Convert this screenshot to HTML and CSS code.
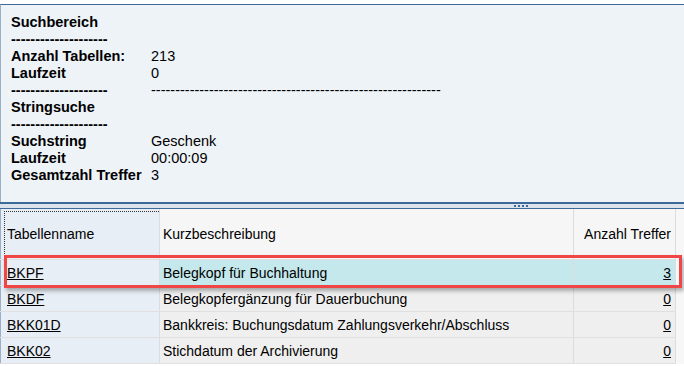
FILE: index.html
```html
<!DOCTYPE html>
<html lang="de">
  <head>
    <meta charset="UTF-8" />
    <meta name="viewport" content="width=device-width, initial-scale=1.0" />
    <title>Stringsuche</title>
    <link rel="stylesheet" href="styles.css">
  </head>
  <body>
    <div class="info">
      <div class="info-grid">
        <div class="b">Suchbereich</div><div></div>
        <div class="b">--------------------</div><div></div>
        <div class="b">Anzahl Tabellen:</div><div>213</div>
        <div class="b">Laufzeit</div><div>0</div>
        <div class="b">--------------------</div><div>------------------------------------------------------------</div>
        <div class="b">Stringsuche</div><div></div>
        <div class="b">--------------------</div><div></div>
        <div class="b">Suchstring</div><div>Geschenk</div>
        <div class="b">Laufzeit</div><div>00:00:09</div>
        <div class="b">Gesamtzahl Treffer</div><div>3</div>
      </div>
    </div>

    <div class="splitter"><span></span><span></span><span></span><span></span></div>

    <div class="result">
      <table class="grid">
        <thead>
          <tr>
            <th class="key focus"><span>Tabellenname</span></th>
            <th>Kurzbeschreibung</th>
            <th class="num">Anzahl Treffer</th>
            <th class="fill"></th>
          </tr>
        </thead>
        <tbody>
          <tr class="sel">
            <td class="key"><a href="#">BKPF</a></td>
            <td>Belegkopf für Buchhaltung</td>
            <td class="num"><a href="#">3</a></td>
            <td class="fill"></td>
          </tr>
          <tr>
            <td class="key"><a href="#">BKDF</a></td>
            <td>Belegkopfergänzung für Dauerbuchung</td>
            <td class="num"><a href="#">0</a></td>
            <td class="fill"></td>
          </tr>
          <tr>
            <td class="key"><a href="#">BKK01D</a></td>
            <td>Bankkreis: Buchungsdatum Zahlungsverkehr/Abschluss</td>
            <td class="num"><a href="#">0</a></td>
            <td class="fill"></td>
          </tr>
          <tr>
            <td class="key"><a href="#">BKK02</a></td>
            <td>Stichdatum der Archivierung</td>
            <td class="num"><a href="#">0</a></td>
            <td class="fill"></td>
          </tr>
        </tbody>
      </table>
      <div class="mark"></div>
    </div>
  </body>
</html>
```

FILE: styles.css
```css
body {
  margin: 0;
  width: 684px;
  height: 366px;
  overflow: hidden;
  background: #fff;
  font-family: "Liberation Sans", Arial, sans-serif;
  font-size: 14px;
  color: #000;
}
.info {
  margin-top: 4px;
  height: 198px;
  box-sizing: border-box;
  border-top: 1px solid #3d6a98;
  border-left: 1px solid #9bb0c6;
  background: #eef3f8;
  padding: 9px 0 0 10px;
  font-size: 14.5px;
}
.info-grid {
  display: grid;
  grid-template-columns: 140px auto;
  line-height: 17px;
  white-space: nowrap;
}
.b {
  font-weight: bold;
}
.splitter {
  height: 7px;
  box-sizing: border-box;
  border-top: 2px solid #3d6a98;
  border-bottom: 1px solid #3d6a98;
  background: #dde3ea;
  display: flex;
  align-items: center;
  gap: 2px;
  padding-left: 514px;
}
.splitter span {
  width: 2px;
  height: 2px;
  background: #3d6a98;
}
.result {
  position: relative;
  background: #f7f7f7;
}
.grid {
  border-collapse: collapse;
  table-layout: fixed;
  width: 684px;
}
.grid th,
.grid td {
  padding: 0 0 0 3px;
  text-align: left;
  font-weight: normal;
  white-space: nowrap;
  overflow: hidden;
  border-right: 1px solid #dcdcdc;
  border-bottom: 1px solid #e0e0e0;
}
.grid th {
  height: 50px;
  background: #f6f6f6;
}
.grid td {
  height: 25px;
  background: #efefef;
}
.grid th:nth-child(1) { width: 155px; }
.grid th:nth-child(2) { width: 410px; }
.grid th:nth-child(3) { width: 97px; }
.grid .key {
  background: #e8eef5;
  padding-left: 6px;
  border-left: 1px solid #9bb0c6;
}
.grid th.key {
  padding-left: 3px;
}
.grid th.key span {
  display: flex;
  align-items: center;
  height: 45px;
  padding-left: 2px;
  border: 1px dotted #333;
  border-right: none;
}
.grid .num {
  text-align: right;
  padding: 0 4px 0 0;
}
.grid .fill {
  background: #f7f7f7;
  border-right: none;
  border-bottom: none;
}
.grid a {
  color: #000;
  text-decoration: underline;
}
.grid tr.sel td {
  background: #c4e8ec;
}
.grid tr.sel td.key {
  background: #e8eef5;
}
.grid tr.sel td.fill {
  background: #f7f7f7;
}
.mark {
  position: absolute;
  left: 4px;
  top: 46px;
  width: 672px;
  height: 27px;
  border: 3px solid #f04646;
  box-shadow: 2px 3px 4px rgba(0, 0, 0, 0.3);
}
```
